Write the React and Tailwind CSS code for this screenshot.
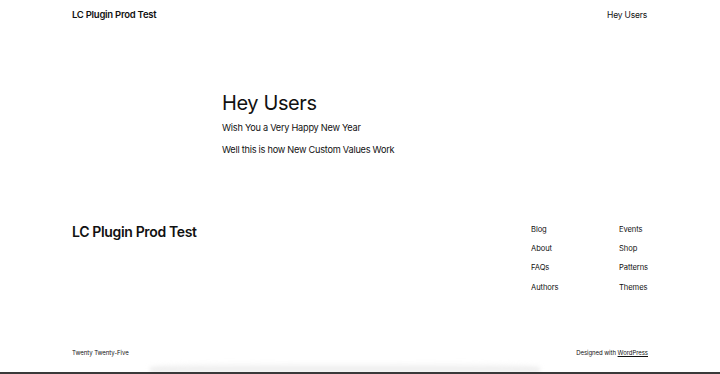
export default function App() {
  const font = { fontFamily: 'Inter, "Noto Sans", sans-serif' };
  return (
    <div className="relative w-[720px] h-[374px] bg-white overflow-hidden text-[#111]" style={font}>
      <header className="flex h-[30px] items-center justify-between px-[72px] pt-[1px]">
        <span className="text-[9.5px] font-semibold tracking-[-0.25px]">LC Plugin Prod Test</span>
        <span className="text-[8.5px] tracking-[-0.2px] mr-[1px]">Hey Users</span>
      </header>
      <main className="pl-[222px] pt-[61px]">
        <h1 className="text-[20px] leading-[24px] tracking-[-0.4px]">Hey Users</h1>
        <p className="mt-[6px] text-[9.2px] leading-[13px] tracking-[-0.25px]">Wish You a Very Happy New Year</p>
        <p className="mt-[9px] text-[9.2px] leading-[13px] tracking-[-0.25px]">Well this is how New Custom Values Work</p>
      </main>
      <footer className="mt-[63px] px-[72px]">
        <div className="flex justify-between">
          <div className="mt-[4px] text-[14px] leading-[18px] font-semibold tracking-[-0.35px]">LC Plugin Prod Test</div>
          <div className="flex mt-[5px] text-[7.6px] leading-[11px] tracking-[-0.1px]">
            <div className="flex w-[88px] flex-col gap-[8.2px]">
              <span>Blog</span><span>About</span><span>FAQs</span><span>Authors</span>
            </div>
            <div className="flex flex-col gap-[8.2px]">
              <span>Events</span><span>Shop</span><span>Patterns</span><span>Themes</span>
            </div>
          </div>
        </div>
        <div className="mt-[56px] flex justify-between text-[6px] leading-[8px] tracking-[-0.05px]">
          <span>Twenty Twenty-Five</span>
          <span>Designed with <span className="underline">WordPress</span></span>
        </div>
      </footer>
      <div className="absolute left-[150px] right-[180px] bottom-[2px] h-[10px] bg-gradient-to-b from-transparent to-[#e8e8e8] rounded-t-[50%] blur-[2px]" />
      <div className="absolute left-0 right-0 bottom-0 h-[2px] bg-[#3a3a3a]" />
    </div>
  );
}
